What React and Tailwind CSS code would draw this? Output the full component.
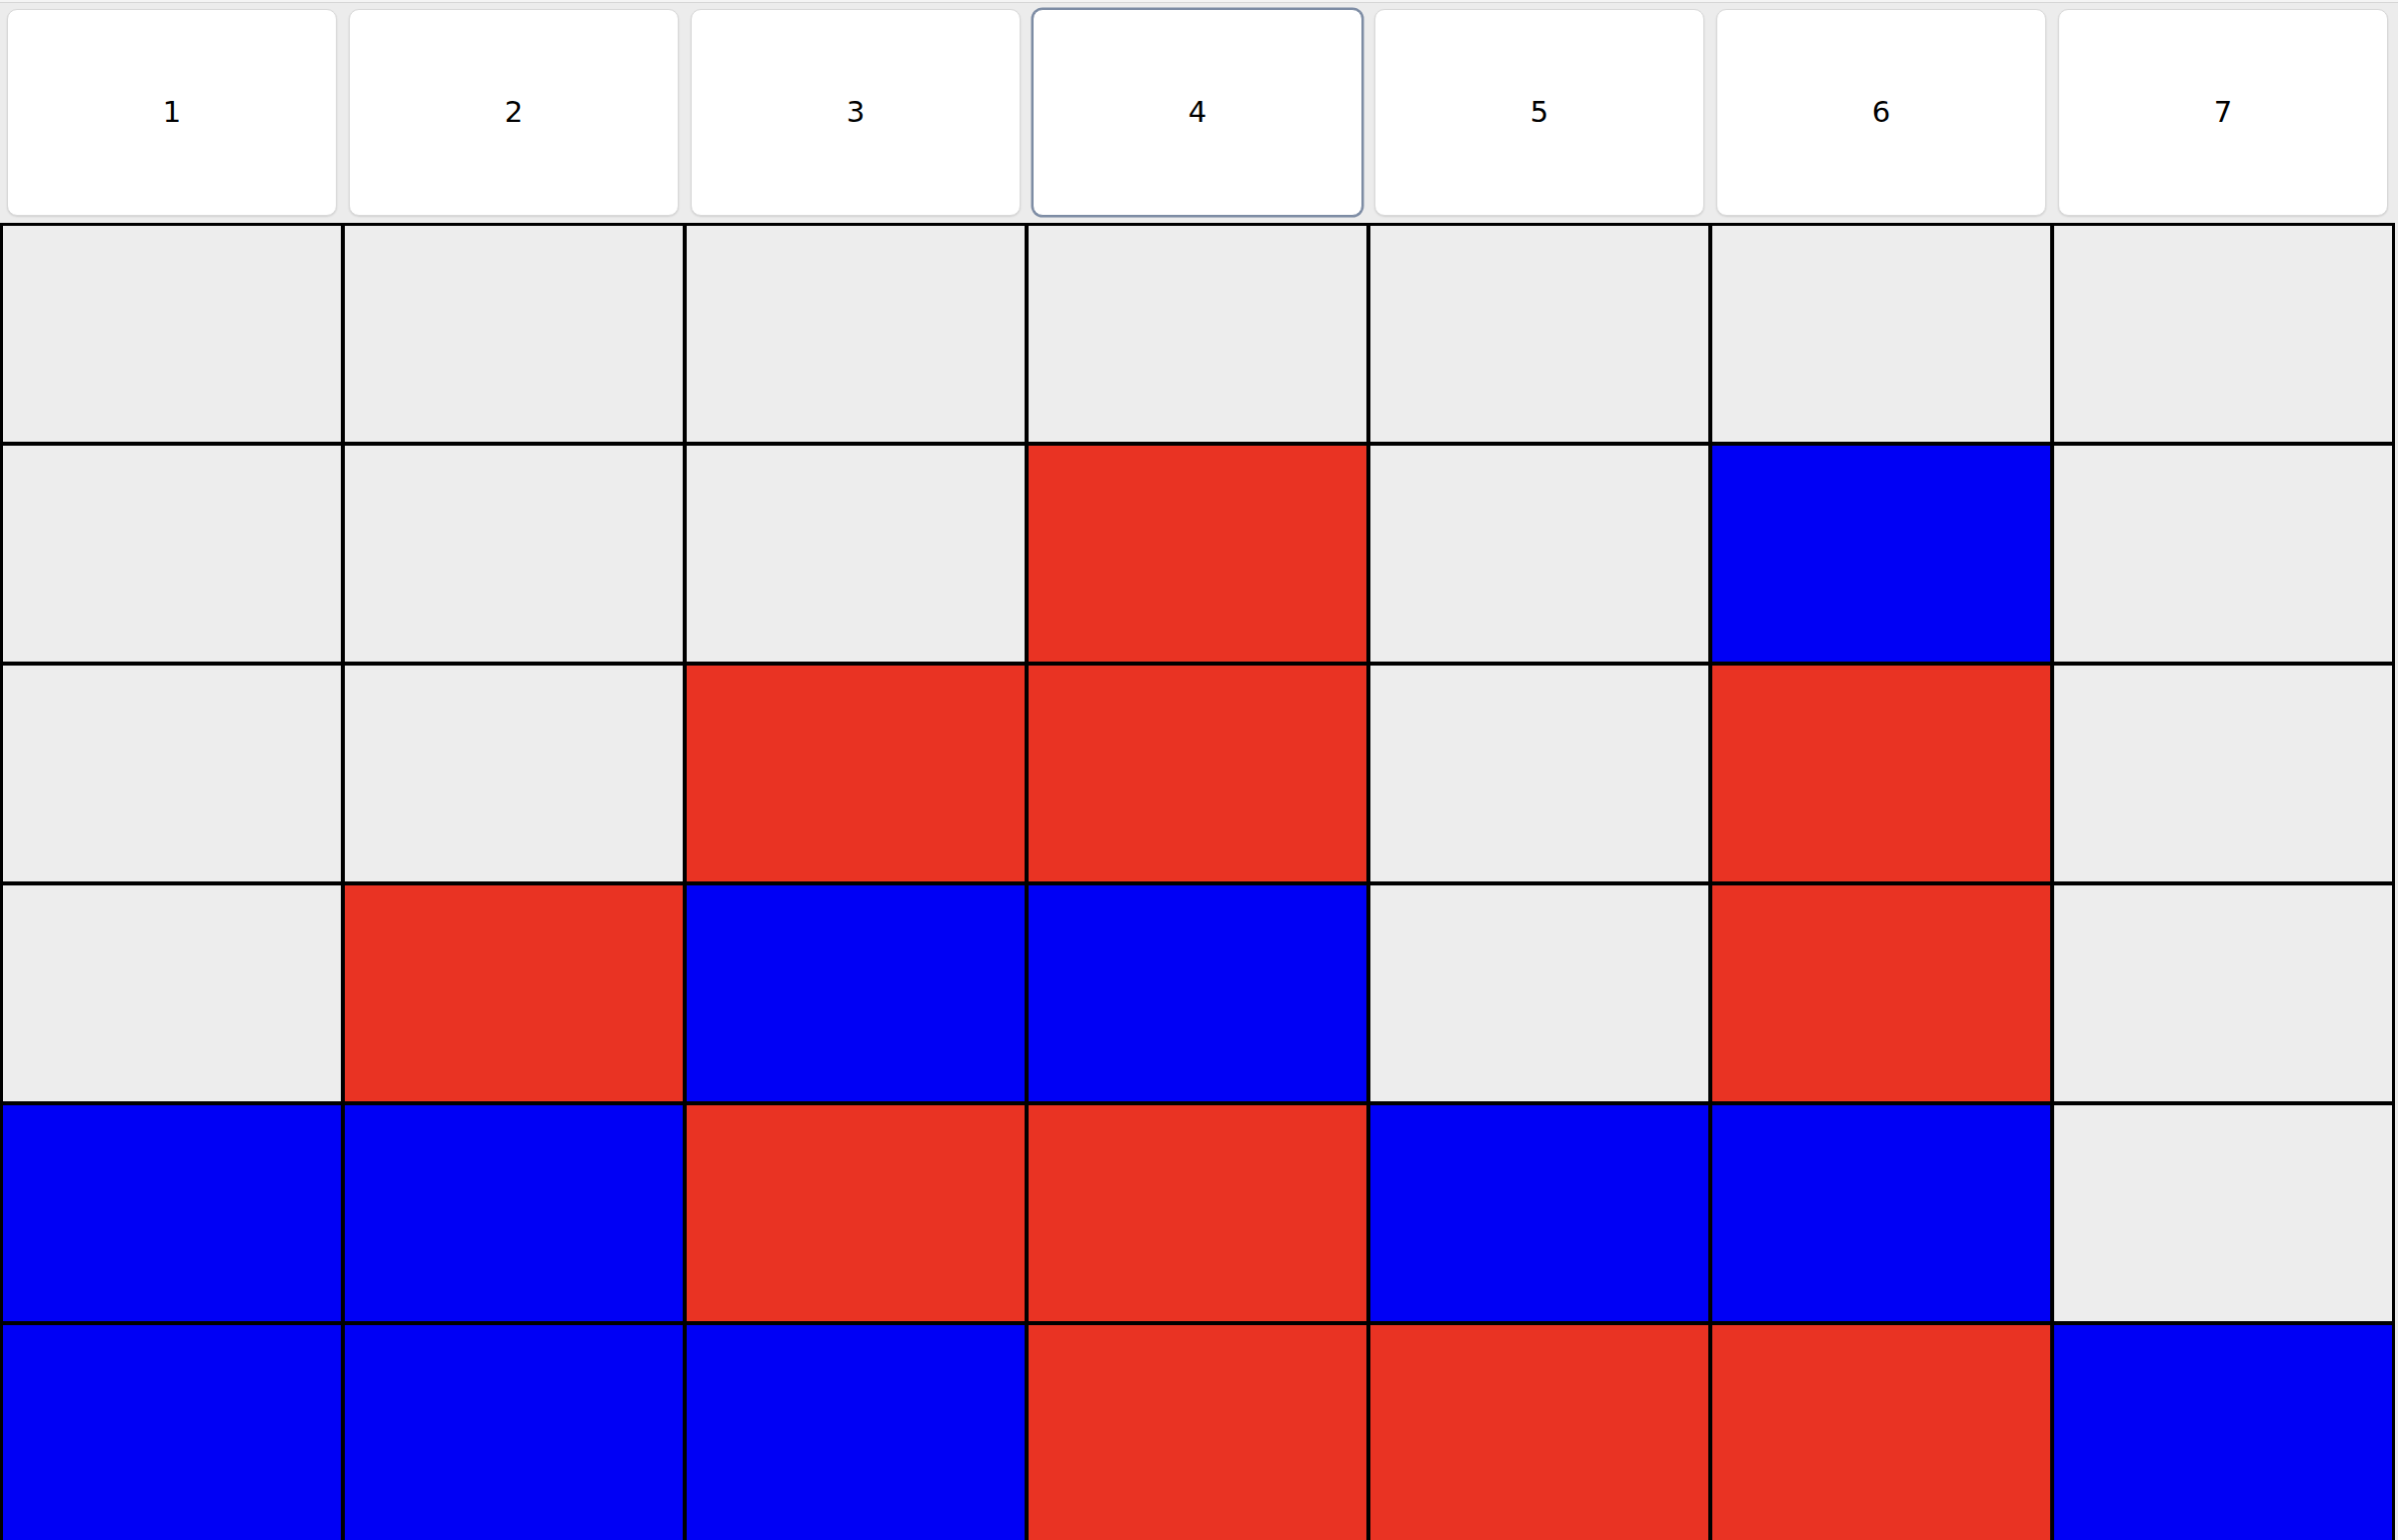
import React, { useState } from 'react';

const ROWS = [
  ['e', 'e', 'e', 'e', 'e', 'e', 'e'],
  ['e', 'e', 'e', 'r', 'e', 'b', 'e'],
  ['e', 'e', 'r', 'r', 'e', 'r', 'e'],
  ['e', 'r', 'b', 'b', 'e', 'r', 'e'],
  ['b', 'b', 'r', 'r', 'b', 'b', 'e'],
  ['b', 'b', 'b', 'r', 'r', 'r', 'b'],
];

const CELL_BG = {
  e: 'bg-[#ededed]',
  r: 'bg-[#e93323]',
  b: 'bg-[#0000f5]',
};

const App = () => {
  const [selected, setSelected] = useState(3);

  return (
    <div
      className="w-full h-[1541px] overflow-hidden bg-[#ececec]"
      style={{ fontFamily: '"DejaVu Sans", Verdana, sans-serif' }}
    >
      <div className="h-[2px] bg-[#f4f4f4]"></div>
      <div className="h-px bg-[#d6d6d6]"></div>

      {/* column buttons */}
      <div className="flex gap-[12px] pl-[7px] pt-[6px] pb-[7px]">
        {[1, 2, 3, 4, 5, 6, 7].map((n, i) => (
          <button
            key={n}
            onClick={() => setSelected(i)}
            className={`w-[330px] h-[207px] bg-white rounded-[10px] border text-[29px] text-black flex items-center justify-center shadow-[0_1px_2px_rgba(0,0,0,0.12)] ${
              selected === i
                ? 'border-[#7d8ca4] ring-[1.5px] ring-[#7d8ca4]'
                : 'border-[#d9d9d9]'
            }`}
          >
            {n}
          </button>
        ))}
      </div>

      {/* board */}
      <div className="w-[2396px] border-[3px] border-black bg-black grid grid-cols-[repeat(7,338px)] auto-rows-[216px] gap-[4px]">
        {ROWS.map((row, r) =>
          row.map((c, k) => (
            <div key={`${r}-${k}`} className={CELL_BG[c]}></div>
          ))
        )}
      </div>
    </div>
  );
};

export default App;
